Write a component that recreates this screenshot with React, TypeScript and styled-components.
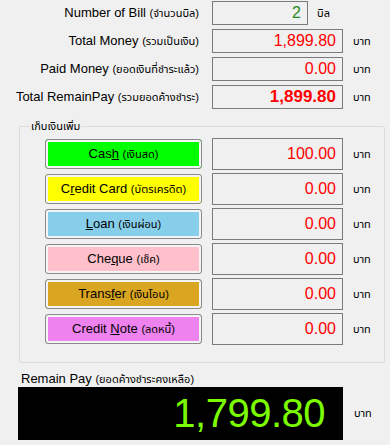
import * as React from 'react';
import styled, { createGlobalStyle } from 'styled-components';

const GlobalStyle = createGlobalStyle`
  body {
    margin: 0;
    background: #f0f0f0;
    font-family: "Liberation Sans", "Noto Sans Thai", "Noto Sans", Arial, sans-serif;
    color: #000;
  }
`;

const Page = styled.div`
  width: 390px;
  height: 445px;
  padding-top: 1px;
  box-sizing: border-box;
  overflow: hidden;
`;

const Summary = styled.div`
  display: flex;
  flex-direction: column;
  gap: 4px;
`;

const Row = styled.div`
  display: flex;
  align-items: center;
`;

const Label = styled.div`
  width: 199px;
  text-align: right;
  font-size: 13px;
  white-space: nowrap;
`;

const Thai = styled.span`
  font-size: 11px;
`;

const ValueBox = styled.div<{ $width: number; $height: number; $color: string; $bold?: boolean }>`
  width: ${(p) => p.$width}px;
  height: ${(p) => p.$height}px;
  box-sizing: border-box;
  border: 1px solid #7a7a7a;
  background: #f0f0f0;
  display: flex;
  align-items: center;
  justify-content: flex-end;
  padding-right: 6px;
  font-size: ${(p) => (p.$bold ? 17 : 16)}px;
  font-weight: ${(p) => (p.$bold ? 700 : 400)};
  color: ${(p) => p.$color};
`;

const SummaryBox = styled(ValueBox)`
  margin-left: 13px;
`;

const Unit = styled.span<{ $gap: number }>`
  margin-left: ${(p) => p.$gap}px;
  font-size: 11px;
`;

const Group = styled.fieldset`
  margin: 10px 5px 0 19px;
  padding: 5px 0 17px 25px;
  border: 1px solid #dcdcdc;
  border-radius: 2px;
  min-width: 0;
`;

const Legend = styled.legend`
  margin-left: -15px;
  padding: 0 1px;
  font-size: 11px;
  line-height: 14px;
`;

const PayList = styled.div`
  display: flex;
  flex-direction: column;
  gap: 3px;
`;

const PayButton = styled.button<{ $bg: string }>`
  width: 157px;
  height: 30px;
  margin-right: 10px;
  padding: 0;
  border: 1px solid #8a8a8a;
  border-radius: 3px;
  background: ${(p) => p.$bg};
  box-shadow: inset 0 0 0 2px #f4f4f4;
  font-family: inherit;
  font-size: 13px;
  color: #000;
  cursor: pointer;
`;

const Remain = styled.div`
  margin: 8px 0 0 18px;
`;

const RemainLabel = styled.div`
  font-size: 13px;
  line-height: 16px;
  padding-left: 3px;
`;

const Display = styled.div`
  width: 325px;
  height: 53px;
  background: #000;
  color: #7cfc00;
  display: flex;
  align-items: center;
  justify-content: flex-end;
  padding-right: 18px;
  box-sizing: border-box;
  font-size: 40px;
  letter-spacing: -0.5px;
`;

const payments = [
  { pre: 'Cas', key: 'h', post: '', thai: 'เงินสด', bg: '#00ff00', amount: '100.00' },
  { pre: 'C', key: 'r', post: 'edit Card', thai: 'บัตรเครดิต', bg: '#ffff00', amount: '0.00' },
  { pre: '', key: 'L', post: 'oan', thai: 'เงินผ่อน', bg: '#87ceeb', amount: '0.00' },
  { pre: 'Che', key: 'q', post: 'ue', thai: 'เช็ค', bg: '#ffc0cb', amount: '0.00' },
  { pre: 'Trans', key: 'f', post: 'er', thai: 'เงินโอน', bg: '#daa520', amount: '0.00' },
  { pre: 'Credit ', key: 'N', post: 'ote', thai: 'ลดหนี้', bg: '#ee82ee', amount: '0.00' },
];

export default function App() {
  return (
    <Page>
      <GlobalStyle />
      <Summary>
        <Row>
          <Label>
            Number of Bill <Thai>(จำนวนบิล)</Thai>
          </Label>
          <SummaryBox $width={96} $height={24} $color="#228b22">
            2
          </SummaryBox>
          <Unit $gap={9}>บิล</Unit>
        </Row>
        <Row>
          <Label>
            Total Money <Thai>(รวมเป็นเงิน)</Thai>
          </Label>
          <SummaryBox $width={131} $height={24} $color="#ff0000">
            1,899.80
          </SummaryBox>
          <Unit $gap={10}>บาท</Unit>
        </Row>
        <Row>
          <Label>
            Paid Money <Thai>(ยอดเงินที่ชำระแล้ว)</Thai>
          </Label>
          <SummaryBox $width={131} $height={24} $color="#ff0000">
            0.00
          </SummaryBox>
          <Unit $gap={10}>บาท</Unit>
        </Row>
        <Row>
          <Label>
            Total RemainPay <Thai>(รวมยอดค้างชำระ)</Thai>
          </Label>
          <SummaryBox $width={131} $height={24} $color="#ff0000" $bold>
            1,899.80
          </SummaryBox>
          <Unit $gap={10}>บาท</Unit>
        </Row>
      </Summary>

      <Group>
        <Legend>เก็บเงินเพิ่ม</Legend>
        <PayList>
          {payments.map((p) => (
            <Row key={p.thai}>
              <PayButton $bg={p.bg}>
                {p.pre}
                <u>{p.key}</u>
                {p.post} <Thai>({p.thai})</Thai>
              </PayButton>
              <ValueBox $width={131} $height={32} $color="#ff0000">
                {p.amount}
              </ValueBox>
              <Unit $gap={10}>บาท</Unit>
            </Row>
          ))}
        </PayList>
      </Group>

      <Remain>
        <RemainLabel>
          Remain Pay <Thai>(ยอดค้างชำระคงเหลือ)</Thai>
        </RemainLabel>
        <Row>
          <Display>1,799.80</Display>
          <Unit $gap={11}>บาท</Unit>
        </Row>
      </Remain>
    </Page>
  );
}
